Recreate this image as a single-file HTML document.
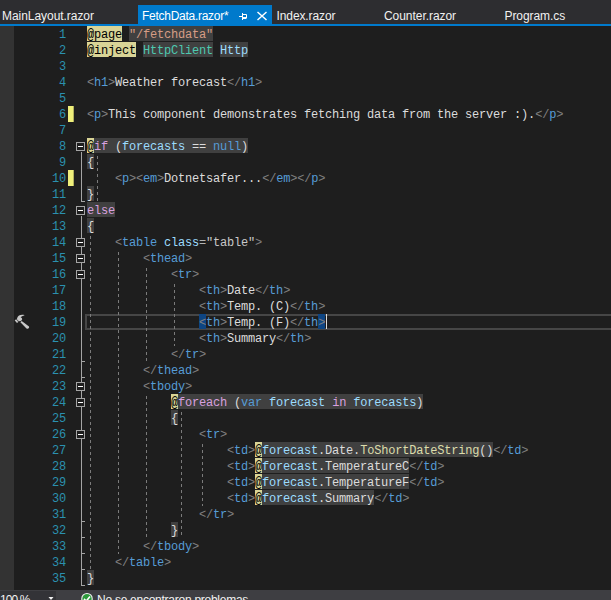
<!DOCTYPE html>
<html>
<head>
<meta charset="utf-8">
<title>FetchData.razor</title>
<style>
html,body{margin:0;padding:0;}
body{width:611px;height:600px;overflow:hidden;background:#1e1e1e;position:relative;font-family:"Liberation Sans",sans-serif;}
#top{position:absolute;left:0;top:0;width:611px;height:24px;background:#2d2d30;}
#blue{position:absolute;left:0;top:24px;width:611px;height:2px;background:#007acc;}
.tab{position:absolute;top:5.5px;height:19px;line-height:20px;font-size:12px;color:#f1f1f1;white-space:nowrap;}
#active{position:absolute;left:138px;top:5px;width:134px;height:19px;background:#007acc;}
#margin{position:absolute;left:0;top:26px;width:14px;height:564px;background:#333333;}
#nums{position:absolute;left:20px;top:26px;width:46px;text-align:right;color:#2b91af;}
#nums div,.ln{height:16px;line-height:16px;white-space:pre;}
#nums,#code{font-family:"Liberation Mono",monospace;font-size:12px;letter-spacing:-0.2px;}
#nums div{position:relative;top:1px;}
#code{position:absolute;left:87px;top:26px;color:#dcdcdc;}
.ln{line-height:18px;}
.ln span{display:inline-block;height:15px;line-height:18px;vertical-align:top;}
.bg{background:#404040;}
.dir{color:#000;background:#d9d496;}
.bm{background:#0e4583;}
.ln .dir b{display:inline-block;font-weight:bold;transform:translateY(0.65px) scaleY(1.21);transform-origin:50% 50%;}
.d{color:#808080} .e{color:#569cd6} .t{color:#dcdcdc} .s{color:#d69d85} .a{color:#9cdcfe} .q{color:#b4b4b4} .v{color:#c8c8c8}
.k{color:#569cd6} .c{color:#d8a0df} .i{color:#9cdcfe} .y{color:#4ec9b0} .m{color:#dcdcaa} .p{color:#dcdcdc}
i{position:absolute;display:block;}
.chg{left:68px;width:6px;height:16px;background:linear-gradient(to right,#efef7a 0,#efef7a 5px,#b0b05e 5px,#b0b05e 6px);}
.ol{left:81px;width:1px;background:#a5a5a5;}
.ob{left:76px;width:7px;height:7px;border:1px solid #a5a5a5;background:#1e1e1e;}
.ob b{position:absolute;left:1px;top:3px;width:5px;height:1px;background:#fff;}
.hk{left:81px;width:4px;height:1px;background:#a5a5a5;}
.gd{width:1px;background:repeating-linear-gradient(to bottom,transparent 0,transparent 2px,#7b7b7b 2px,#7b7b7b 5px,transparent 5px,transparent 6px);}
#cur{left:85px;top:314px;width:540px;height:12px;border:2px solid #464646;}
#caret{left:326px;top:314px;width:1px;height:15px;background:#dcdcdc;}
#bot{position:absolute;left:0;top:590px;width:611px;height:10px;background:#3e3e42;overflow:hidden;}
#zoom{position:absolute;left:0;top:1px;width:56px;height:9px;background:#333337;}
.bt{position:absolute;font-size:12px;line-height:14px;color:#f1f1f1;white-space:nowrap;}
</style>
</head>
<body>
<div id="top"></div>
<div id="active"></div>
<div id="blue"></div>
<div class="tab" style="left:2px;letter-spacing:-0.05px">MainLayout.razor</div>
<div class="tab" style="left:142px;color:#fff;letter-spacing:-0.27px">FetchData.razor*</div>
<svg style="position:absolute;left:237px;top:11px" width="12" height="11" viewBox="0 0 12 11"><path d="M2 5.5H5M5.5 2V9M5.5 3.5H9.5V7M5.5 7.5H9.5M5.5 6.5H9.5" stroke="#fff" stroke-width="1" fill="none"/></svg>
<svg style="position:absolute;left:256px;top:11px" width="12" height="10" viewBox="0 0 12 10"><path d="M1.5 1L10.5 9M10.5 1L1.5 9" stroke="#fff" stroke-width="1.45" fill="none"/></svg>
<div class="tab" style="left:276.5px;letter-spacing:-0.1px">Index.razor</div>
<div class="tab" style="left:384px;letter-spacing:-0.05px">Counter.razor</div>
<div class="tab" style="left:504.5px;letter-spacing:-0.08px">Program.cs</div>

<div id="margin"></div>
<svg style="position:absolute;left:14px;top:314px" width="17" height="17" viewBox="0 0 17 17"><g fill="#c8c8c8"><path d="M10.3 1C8.4 0.5 6.3 0.7 5 1.6C4 2.3 3.3 3.3 3 4.4L3.3 5.7L4.7 7L6 7.3L7.5 6.5L8.2 5.2L7.8 4L6.6 3.3C7.4 2.5 8.8 1.9 10.3 1.5Z"/><path d="M2.1 5.3L0.7 6.4L3 8.9L4.3 7.9Z"/><path d="M2.5 5L3.3 4.6L4.9 7.2L4.2 7.8Z" opacity="0.45"/><path d="M7.7 6.9L15 12.5Q15.7 14 14 14.7Q13.2 15 12.5 14.6L6.4 8.2Z"/></g></svg>
<i id="cur"></i>
<i class="gd" style="left:97px;top:154px;height:48px"></i><i class="gd" style="left:90px;top:234px;height:336px"></i><i class="gd" style="left:118px;top:250px;height:304px"></i><i class="gd" style="left:146px;top:266px;height:96px"></i><i class="gd" style="left:174px;top:282px;height:64px"></i><i class="gd" style="left:146px;top:394px;height:144px"></i><i class="gd" style="left:181px;top:410px;height:128px"></i><i class="gd" style="left:202px;top:442px;height:64px"></i>
<i class="ol" style="top:152px;height:50px"></i><i class="ol" style="top:216px;height:370px"></i>
<i class="ob" style="top:142px"><b></b></i><i class="ob" style="top:206px"><b></b></i><i class="ob" style="top:238px"><b></b></i><i class="ob" style="top:254px"><b></b></i><i class="ob" style="top:270px"><b></b></i><i class="ob" style="top:382px"><b></b></i><i class="ob" style="top:398px"><b></b></i><i class="ob" style="top:430px"><b></b></i>
<i class="hk" style="top:201px"></i><i class="hk" style="top:361px"></i><i class="hk" style="top:377px"></i><i class="hk" style="top:521px"></i><i class="hk" style="top:537px"></i><i class="hk" style="top:553px"></i><i class="hk" style="top:569px"></i><i class="hk" style="top:585px"></i>
<i class="chg" style="top:106px"></i><i class="chg" style="top:170px"></i>
<div id="nums"><div>1</div><div>2</div><div>3</div><div>4</div><div>5</div><div>6</div><div>7</div><div>8</div><div>9</div><div>10</div><div>11</div><div>12</div><div>13</div><div>14</div><div>15</div><div>16</div><div>17</div><div>18</div><div>19</div><div>20</div><div>21</div><div>22</div><div>23</div><div>24</div><div>25</div><div>26</div><div>27</div><div>28</div><div>29</div><div>30</div><div>31</div><div>32</div><div>33</div><div>34</div><div>35</div></div>
<div id="code">
<div class="ln"><span class="dir"><b>@</b>page</span> <span class="bg"><span class="s">"/fetchdata"</span></span></div>
<div class="ln"><span class="dir"><b>@</b>inject</span> <span class="bg"><span class="y">HttpClient</span></span> <span class="bg"><span class="i">Http</span></span></div>
<div class="ln"></div>
<div class="ln"><span class="d">&lt;</span><span class="e">h1</span><span class="d">&gt;</span><span class="t">Weather forecast</span><span class="d">&lt;/</span><span class="e">h1</span><span class="d">&gt;</span></div>
<div class="ln"></div>
<div class="ln"><span class="d">&lt;</span><span class="e">p</span><span class="d">&gt;</span><span class="t">This component demonstrates fetching data from the server :).</span><span class="d">&lt;/</span><span class="e">p</span><span class="d">&gt;</span></div>
<div class="ln"></div>
<div class="ln"><span class="dir"><b>@</b></span><span class="bg"><span class="c">if</span><span class="p"> (</span><span class="i">forecasts</span><span class="p"> == </span><span class="k">null</span><span class="p">)</span></span></div>
<div class="ln"><span class="bg"><span class="p">{</span></span></div>
<div class="ln">    <span class="d">&lt;</span><span class="e">p</span><span class="d">&gt;</span><span class="d">&lt;</span><span class="e">em</span><span class="d">&gt;</span><span class="t">Dotnetsafer...</span><span class="d">&lt;/</span><span class="e">em</span><span class="d">&gt;</span><span class="d">&lt;/</span><span class="e">p</span><span class="d">&gt;</span></div>
<div class="ln"><span class="bg"><span class="p">}</span></span></div>
<div class="ln"><span class="bg"><span class="c">else</span></span></div>
<div class="ln"><span class="bg"><span class="p">{</span></span></div>
<div class="ln">    <span class="d">&lt;</span><span class="e">table</span> <span class="a">class</span><span class="q">=</span><span class="v">"table"</span><span class="d">&gt;</span></div>
<div class="ln">        <span class="d">&lt;</span><span class="e">thead</span><span class="d">&gt;</span></div>
<div class="ln">            <span class="d">&lt;</span><span class="e">tr</span><span class="d">&gt;</span></div>
<div class="ln">                <span class="d">&lt;</span><span class="e">th</span><span class="d">&gt;</span><span class="t">Date</span><span class="d">&lt;/</span><span class="e">th</span><span class="d">&gt;</span></div>
<div class="ln">                <span class="d">&lt;</span><span class="e">th</span><span class="d">&gt;</span><span class="t">Temp. (C)</span><span class="d">&lt;/</span><span class="e">th</span><span class="d">&gt;</span></div>
<div class="ln">                <span class="bm"><span class="d">&lt;</span></span><span class="e">th</span><span class="d">&gt;</span><span class="t">Temp. (F)</span><span class="d">&lt;/</span><span class="e">th</span><span class="bm"><span class="d">&gt;</span></span></div>
<div class="ln">                <span class="d">&lt;</span><span class="e">th</span><span class="d">&gt;</span><span class="t">Summary</span><span class="d">&lt;/</span><span class="e">th</span><span class="d">&gt;</span></div>
<div class="ln">            <span class="d">&lt;/</span><span class="e">tr</span><span class="d">&gt;</span></div>
<div class="ln">        <span class="d">&lt;/</span><span class="e">thead</span><span class="d">&gt;</span></div>
<div class="ln">        <span class="d">&lt;</span><span class="e">tbody</span><span class="d">&gt;</span></div>
<div class="ln">            <span class="dir"><b>@</b></span><span class="bg"><span class="c">foreach</span><span class="p"> (</span><span class="k">var</span><span class="p"> </span><span class="i">forecast</span><span class="p"> </span><span class="c">in</span><span class="p"> </span><span class="i">forecasts</span><span class="p">)</span></span></div>
<div class="ln">            <span class="bg"><span class="p">{</span></span></div>
<div class="ln">                <span class="d">&lt;</span><span class="e">tr</span><span class="d">&gt;</span></div>
<div class="ln">                    <span class="d">&lt;</span><span class="e">td</span><span class="d">&gt;</span><span class="dir"><b>@</b></span><span class="bg"><span class="i">forecast</span><span class="p">.Date.</span><span class="m">ToShortDateString</span><span class="p">()</span></span><span class="d">&lt;/</span><span class="e">td</span><span class="d">&gt;</span></div>
<div class="ln">                    <span class="d">&lt;</span><span class="e">td</span><span class="d">&gt;</span><span class="dir"><b>@</b></span><span class="bg"><span class="i">forecast</span><span class="p">.TemperatureC</span></span><span class="d">&lt;/</span><span class="e">td</span><span class="d">&gt;</span></div>
<div class="ln">                    <span class="d">&lt;</span><span class="e">td</span><span class="d">&gt;</span><span class="dir"><b>@</b></span><span class="bg"><span class="i">forecast</span><span class="p">.TemperatureF</span></span><span class="d">&lt;/</span><span class="e">td</span><span class="d">&gt;</span></div>
<div class="ln">                    <span class="d">&lt;</span><span class="e">td</span><span class="d">&gt;</span><span class="dir"><b>@</b></span><span class="bg"><span class="i">forecast</span><span class="p">.Summary</span></span><span class="d">&lt;/</span><span class="e">td</span><span class="d">&gt;</span></div>
<div class="ln">                <span class="d">&lt;/</span><span class="e">tr</span><span class="d">&gt;</span></div>
<div class="ln">            <span class="bg"><span class="p">}</span></span></div>
<div class="ln">        <span class="d">&lt;/</span><span class="e">tbody</span><span class="d">&gt;</span></div>
<div class="ln">    <span class="d">&lt;/</span><span class="e">table</span><span class="d">&gt;</span></div>
<div class="ln"><span class="bg"><span class="p">}</span></span></div>
</div>
<i id="caret"></i>
<div id="bot">
<div id="zoom"></div>
<div class="bt" style="left:0px;top:3px;letter-spacing:-0.9px">100 %</div>
<svg style="position:absolute;left:48px;top:7px" width="6" height="3" viewBox="0 0 6 3"><path d="M0.5 0H5.5L3 3Z" fill="#f1f1f1"/></svg>
<svg style="position:absolute;left:80px;top:2px" width="14" height="14" viewBox="0 0 14 14"><circle cx="7" cy="6.65" r="5.2" fill="#2d9a3c" stroke="#f1f1f1" stroke-width="1.1"/><path d="M4 6.9L6.2 9.1L10 4.5" stroke="#fff" stroke-width="1.6" fill="none"/></svg>
<div class="bt" style="left:97px;top:3px;letter-spacing:-0.26px">No se encontraron problemas</div>
</div>
</body>
</html>
